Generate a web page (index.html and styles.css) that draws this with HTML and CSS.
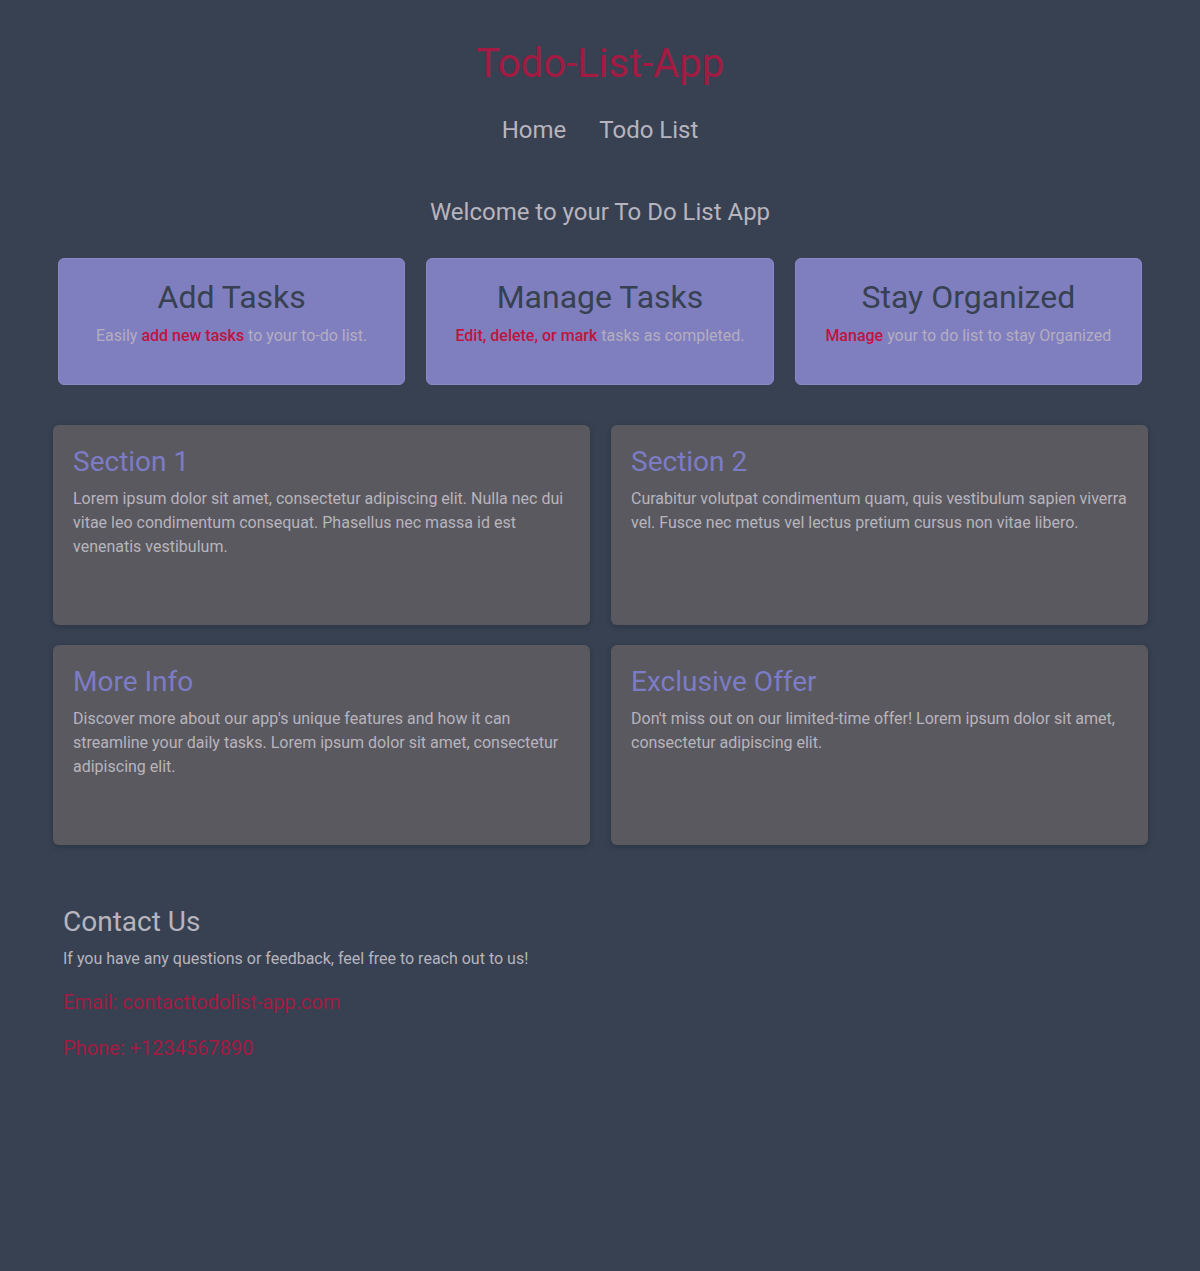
FILE: index.html
```html
<!DOCTYPE html>
<html lang="en">
<head>
<meta charset="utf-8">
<title>Todo-List-App</title>
<link rel="stylesheet" href="styles.css">
</head>
<body>
<header class="header">
  <h1 class="brand">Todo-List-App</h1>
  <nav class="nav">
    <a class="nav-link" href="#">Home</a>
    <a class="nav-link" href="#">Todo List</a>
  </nav>
</header>
<main class="main">
  <h2 class="welcome">Welcome to your To Do List App</h2>
  <div class="features">
    <div class="feature">
      <h3 class="feature-title">Add Tasks</h3>
      <p class="feature-text">Easily <span class="hl">add new tasks</span> to your to-do list.</p>
    </div>
    <div class="feature">
      <h3 class="feature-title">Manage Tasks</h3>
      <p class="feature-text"><span class="hl">Edit, delete, or mark</span> tasks as completed.</p>
    </div>
    <div class="feature">
      <h3 class="feature-title">Stay Organized</h3>
      <p class="feature-text"><span class="hl">Manage</span> your to do list to stay Organized</p>
    </div>
  </div>
  <div class="sections">
    <div class="section">
      <h3 class="section-title">Section 1</h3>
      <p class="section-text">Lorem ipsum dolor sit amet, consectetur adipiscing elit. Nulla nec dui vitae leo condimentum consequat. Phasellus nec massa id est venenatis vestibulum.</p>
    </div>
    <div class="section">
      <h3 class="section-title">Section 2</h3>
      <p class="section-text">Curabitur volutpat condimentum quam, quis vestibulum sapien viverra vel. Fusce nec metus vel lectus pretium cursus non vitae libero.</p>
    </div>
    <div class="section">
      <h3 class="section-title">More Info</h3>
      <p class="section-text">Discover more about our app's unique features and how it can streamline your daily tasks. Lorem ipsum dolor sit amet, consectetur adipiscing elit.</p>
    </div>
    <div class="section">
      <h3 class="section-title">Exclusive Offer</h3>
      <p class="section-text">Don't miss out on our limited-time offer! Lorem ipsum dolor sit amet, consectetur adipiscing elit.</p>
    </div>
  </div>
  <section class="contact">
    <h3 class="contact-title">Contact Us</h3>
    <p class="contact-text">If you have any questions or feedback, feel free to reach out to us!</p>
    <p class="contact-line">Email: contacttodolist-app.com</p>
    <p class="contact-line">Phone: +1234567890</p>
  </section>
</main>
</body>
</html>
```

FILE: styles.css
```css
html, body {
  margin: 0;
  padding: 0;
}
body {
  background: #374151;
  font-family: Roboto, "Liberation Sans", sans-serif;
  color: #b8b4bd;
  min-height: 1271px;
}
.header {
  display: flex;
  flex-direction: column;
  align-items: center;
  padding-top: 40px;
}
.brand {
  margin: 0;
  font-size: 40px;
  font-weight: 400;
  line-height: 48px;
  color: #a31a42;
}
.nav {
  display: flex;
  gap: 33px;
  margin-top: 28px;
}
.nav-link {
  color: #b8b4bd;
  text-decoration: none;
  font-size: 24px;
  line-height: 28px;
}
.main {
  width: 1096px;
  margin: 0 auto;
}
.welcome {
  margin: 54px 0 0;
  text-align: center;
  font-size: 24px;
  font-weight: 400;
  line-height: 28px;
  color: #b8b4bd;
}
.features {
  display: grid;
  grid-template-columns: repeat(3, 1fr);
  gap: 21px;
  margin: 32px 6px 0;
}
.feature {
  background: #7f7fbf;
  border: 1px solid #8a8ac4;
  border-radius: 6px;
  height: 127px;
  box-sizing: border-box;
  padding-top: 19px;
  text-align: center;
}
.feature-title {
  margin: 0;
  font-size: 32px;
  font-weight: 400;
  line-height: 38px;
  color: #374151;
}
.feature-text {
  margin: 10px 0 0;
  font-size: 16px;
  line-height: 19px;
  color: #b5adc0;
}
.hl {
  color: #c0143f;
  font-weight: 500;
}
.sections {
  display: grid;
  grid-template-columns: 1fr 1fr;
  gap: 20px 21px;
  margin: 40px 0 0 1px;
}
.section {
  background: #5a595f;
  border-radius: 6px;
  height: 200px;
  box-sizing: border-box;
  padding: 20px 20px;
  box-shadow: 0 2px 6px rgba(0, 0, 0, 0.18);
}
.section-title {
  margin: 0;
  font-size: 28px;
  font-weight: 400;
  line-height: 33px;
  color: #7c7cc6;
}
.section-text {
  margin: 9px 0 0;
  font-size: 16px;
  line-height: 24px;
  color: #b8b4bd;
}
.contact {
  padding: 60px 11px 0;
}
.contact-title {
  margin: 0;
  font-size: 28px;
  font-weight: 400;
  line-height: 33px;
  color: #b8b4bd;
}
.contact-text {
  margin: 11px 0 0;
  font-size: 16px;
  line-height: 19px;
}
.contact-line {
  margin: 23px 0 0;
  font-size: 20px;
  line-height: 23px;
  color: #a31a42;
}
```
